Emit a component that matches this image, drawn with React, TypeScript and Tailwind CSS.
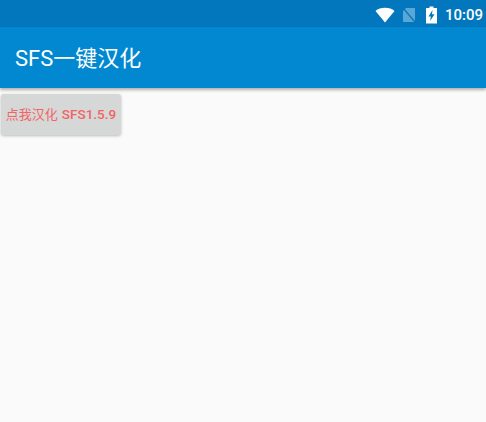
export default function App() {
  return (
    <div className="w-[486px] h-[422px] bg-[#fafafa] flex flex-col overflow-hidden" style={{ fontFamily: 'Roboto, "Noto Sans CJK SC", sans-serif' }}>
      <div className="h-[27px] bg-[#0277bd] flex items-center justify-end pr-[3px] pt-[3px] text-white">
        <svg width="20" height="16" viewBox="0 0 20 16" className="mr-[7px]"><path d="M10 15.5 L0.5 4 C3 2 6 0.8 10 0.8 C14 0.8 17 2 19.5 4 Z" fill="#fff" /></svg>
        <svg width="14" height="16" viewBox="0 0 14 16" className="mr-[9px]"><path d="M1 15 L1 4 L4 1 L13 1 L13 15 Z" fill="#ffffff" fillOpacity="0.35" /><path d="M1 1 L13 15" stroke="#0277bd" strokeWidth="1.2" /></svg>
        <svg width="13" height="18" viewBox="0 0 13 18" className="mr-[7px]"><path fillRule="evenodd" d="M4.5 0.5 H8.5 V2 H12 V17.5 H1 V2 H4.5 Z M7.5 4 L3.5 10.5 H5.8 L5.2 15 L9.5 8.2 H7 Z" fill="#fff" /></svg>
        <span className="text-[15px] leading-none font-medium">10:09</span>
      </div>
      <div className="h-[61px] bg-[#0288d1] flex items-center pl-[15px] pt-[3px] shadow-[0_2px_3px_rgba(0,0,0,0.3)] relative">
        <span className="text-[22px] text-white leading-none">SFS一键汉化</span>
      </div>
      <div className="pt-[6px] pl-[1px]">
        <button className="w-[120px] h-[41px] bg-[#d6d7d7] rounded-[3px] shadow-[0_1px_3px_rgba(0,0,0,0.25)] text-[#f26464] text-[13px] leading-none flex items-center justify-center whitespace-nowrap"><span className="font-normal">点我汉化</span><span className="font-medium text-[13.5px] ml-[4px]">SFS1.5.9</span></button>
      </div>
    </div>
  );
}
